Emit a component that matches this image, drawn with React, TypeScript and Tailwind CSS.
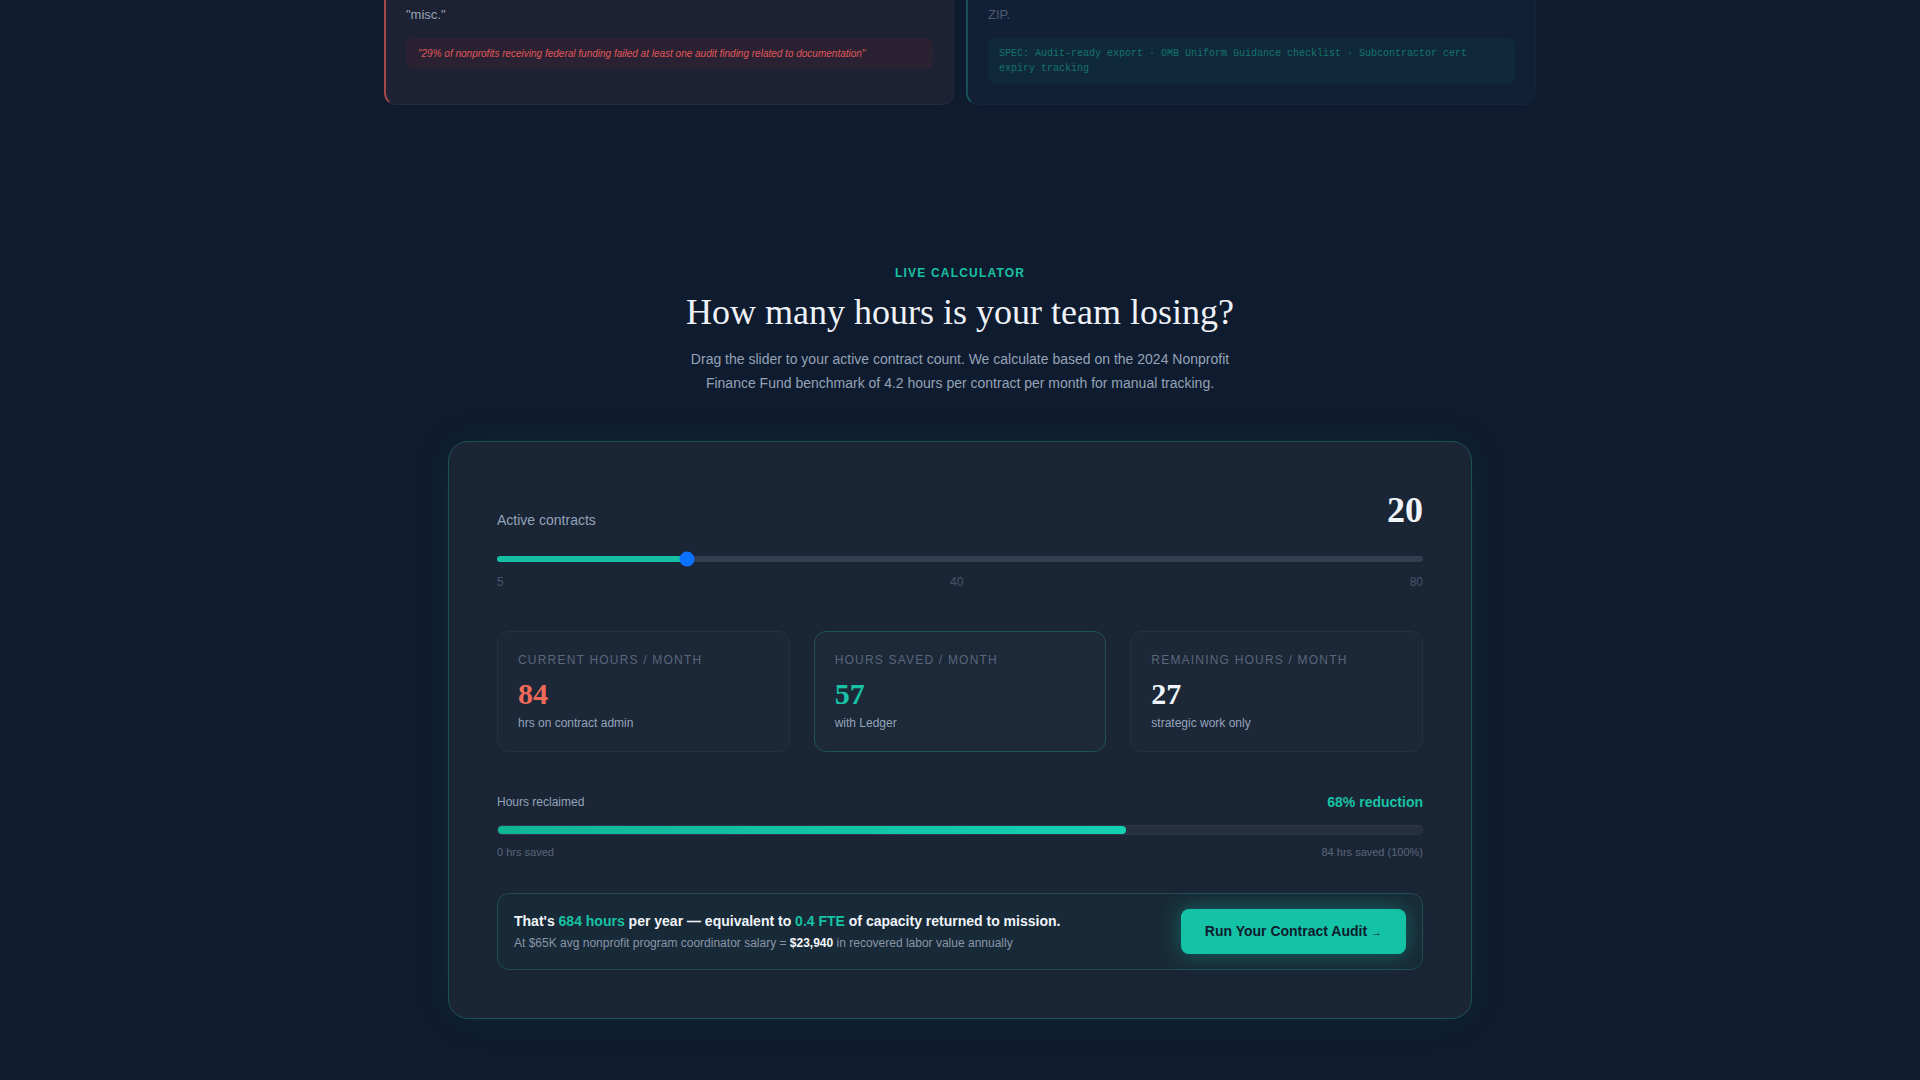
import React, { useState } from "react";

const sans = { fontFamily: '"Liberation Sans", Arial, sans-serif' };

function StatCard({
  label,
  value,
  sub,
  valueClass,
  accent,
}: {
  label: string;
  value: number;
  sub: string;
  valueClass: string;
  accent?: boolean;
}) {
  return (
    <div
      className={`rounded-xl border p-5 ${
        accent ? "border-[#1f5256] bg-[#1c2939]" : "border-[#263244] bg-[#1c2738]"
      }`}
    >
      <p className="text-[12px] leading-4 uppercase tracking-[0.1em] text-[#5a6679]">{label}</p>
      <p className={`mt-2 text-[30px] leading-[36px] font-bold font-['Liberation_Serif',serif] ${valueClass}`}>
        {value}
      </p>
      <p className="mt-[3px] text-[12px] leading-4 text-[#94a3b8]">{sub}</p>
    </div>
  );
}

export default function App() {
  const [contracts] = useState(20);
  const min = 5;
  const max = 80;
  const current = Math.round(contracts * 4.2);
  const saved = Math.round(current * 0.68);
  const remaining = current - saved;
  const pct = ((contracts - min) / (max - min)) * 100;

  return (
    <div className="min-h-screen w-full overflow-hidden bg-[#0f1b2e]" style={sans}>
      {/* Problem cards (scrolled past) */}
      <div className="mx-auto -mt-[115px] grid w-[1152px] grid-cols-2 gap-3">
        <div className="rounded-xl border border-[#262a3e] border-l-2 border-l-[#a6464c] bg-[#1c2133] px-5 pt-5 pb-5">
          <h3 className="mb-2 text-[17px] leading-6 font-bold text-[#e2e8f0]">Restrictions buried in PDFs</h3>
          <p className="text-[13px] leading-[22px] text-[#9aa3b5]">
            Grant restrictions live in PDFs and email threads. Finance teams reconcile
            <br />
            spending by hand each month, cross-referencing budgets against invoices
            <br />
            that arrive late, get recoded, or get filed by a busy program lead as simply
            <br />
            "misc."
          </p>
          <div className="mt-3 rounded-lg bg-[#2a2233] px-3 py-2">
            <p className="text-[10px] leading-[15px] italic text-[#e0565a]">
              "29% of nonprofits receiving federal funding failed at least one audit finding related to documentation"
            </p>
          </div>
        </div>
        <div className="rounded-xl border border-[#14243a] border-l-2 border-l-[#17505a] bg-[#112036] px-5 pt-5 pb-5">
          <h3 className="mb-2 text-[17px] leading-6 font-bold text-[#5d6a7d]">One-click evidence packs</h3>
          <p className="text-[13px] leading-[22px] text-[#4f5c70]">
            Reporting deadlines are tracked automatically. When the auditor arrives,
            <br />
            receipts, timesheets and approvals are already linked to each line item,
            <br />
            so staff can pull every grant, every period, every proof into a single
            <br />
            ZIP.
          </p>
          <div className="mt-3 rounded-lg bg-[#0f283a] px-[11px] py-2">
            <p className="font-['Liberation_Mono',monospace] text-[10px] leading-[15px] text-[#15746d]">
              SPEC: Audit-ready export · OMB Uniform Guidance checklist · Subcontractor cert expiry tracking
            </p>
          </div>
        </div>
      </div>

      {/* Live calculator */}
      <section className="pt-[160px] pb-[60px]">
        <div className="text-center">
          <p className="mb-[10px] text-[12px] leading-4 font-bold uppercase tracking-[0.1em] text-[#17c2a5]">
            Live Calculator
          </p>
          <h2 className="font-['Liberation_Serif',serif] text-[36px] leading-[1.2] text-[#eef2f7]">
            How many hours is your team losing?
          </h2>
          <p className="mx-auto mt-[14px] max-w-[560px] text-[14px] leading-[1.7] text-[#94a3b8]">
            Drag the slider to your active contract count. We calculate based on the 2024 Nonprofit
            Finance Fund benchmark of 4.2 hours per contract per month for manual tracking.
          </p>
        </div>

        <div className="mx-auto mt-[45px] w-[1024px] rounded-[20px] border-[1.5px] border-[#1d5254] bg-[#1a2536] p-12 shadow-[0_0_40px_rgba(20,190,160,0.07)]">
          <div className="mt-0.5 flex items-end justify-between">
            <span className="mb-[-2px] text-[14px] leading-5 text-[#94a3b8]">Active contracts</span>
            <span className="font-['Liberation_Serif',serif] text-[36px] leading-none font-bold text-[#f1f5f9]">
              {contracts}
            </span>
          </div>

          <div className="relative mt-[23px] flex h-4 items-center">
            <div className="h-1.5 w-full rounded-full bg-[#333f51]" />
            <div
              className="absolute left-0 top-1/2 h-1.5 -translate-y-1/2 rounded-full bg-[#14c0a4]"
              style={{ width: `${pct}%` }}
            />
            <div
              className="absolute top-1/2 h-[15px] w-[15px] -translate-x-1/2 -translate-y-1/2 rounded-full bg-[#0b72ff]"
              style={{ left: `calc(${pct}% + ${8 - pct * 0.16}px)` }}
            />
          </div>
          <div className="mt-[7px] flex justify-between text-[12px] leading-4 text-[#475569]">
            <span>5</span>
            <span>40</span>
            <span>80</span>
          </div>

          <div className="mt-[41px] grid grid-cols-3 gap-6">
            <StatCard label="Current hours / month" value={current} sub="hrs on contract admin" valueClass="text-[#f06a5a]" />
            <StatCard label="Hours saved / month" value={saved} sub="with Ledger" valueClass="text-[#17c2a5]" accent />
            <StatCard label="Remaining hours / month" value={remaining} sub="strategic work only" valueClass="text-[#f1f5f9]" />
          </div>

          <div className="mt-[40px] flex items-center justify-between">
            <span className="text-[12px] leading-5 text-[#94a3b8]">Hours reclaimed</span>
            <span className="text-[14px] leading-5 font-bold text-[#17c2a5]">68% reduction</span>
          </div>
          <div className="mt-[13px] h-2.5 w-full rounded-full border border-[#2c3749] bg-[#252f3f]">
            <div className="h-full w-[68%] rounded-full bg-gradient-to-r from-[#10b596] to-[#14d0b3]" />
          </div>
          <div className="mt-[9px] flex justify-between text-[11px] leading-4 text-[#5a6679]">
            <span>0 hrs saved</span>
            <span>{current} hrs saved (100%)</span>
          </div>

          <div className="mt-[33px] flex items-center justify-between rounded-xl border border-[#1f4c52] bg-[#182937] px-4 py-[15px]">
            <div>
              <p className="text-[14px] leading-5 font-bold text-[#f1f5f9]">
                That's <span className="text-[#17c2a5]">{saved * 12} hours</span> per year — equivalent to{" "}
                <span className="text-[#17c2a5]">0.4 FTE</span> of capacity returned to mission.
              </p>
              <p className="mt-1 text-[12px] leading-4 text-[#8a96a8]">
                At $65K avg nonprofit program coordinator salary ={" "}
                <span className="font-bold text-[#f8fafc]">$23,940</span> in recovered labor value annually
              </p>
            </div>
            <button className="rounded-lg bg-[#14c3a5] px-6 py-3 text-[14px] leading-5 font-bold text-[#0f1c2e] shadow-[0_0_22px_rgba(20,195,165,0.4)]">
              Run Your Contract Audit <span className="text-[11px]">→</span>
            </button>
          </div>
        </div>
      </section>
    </div>
  );
}
